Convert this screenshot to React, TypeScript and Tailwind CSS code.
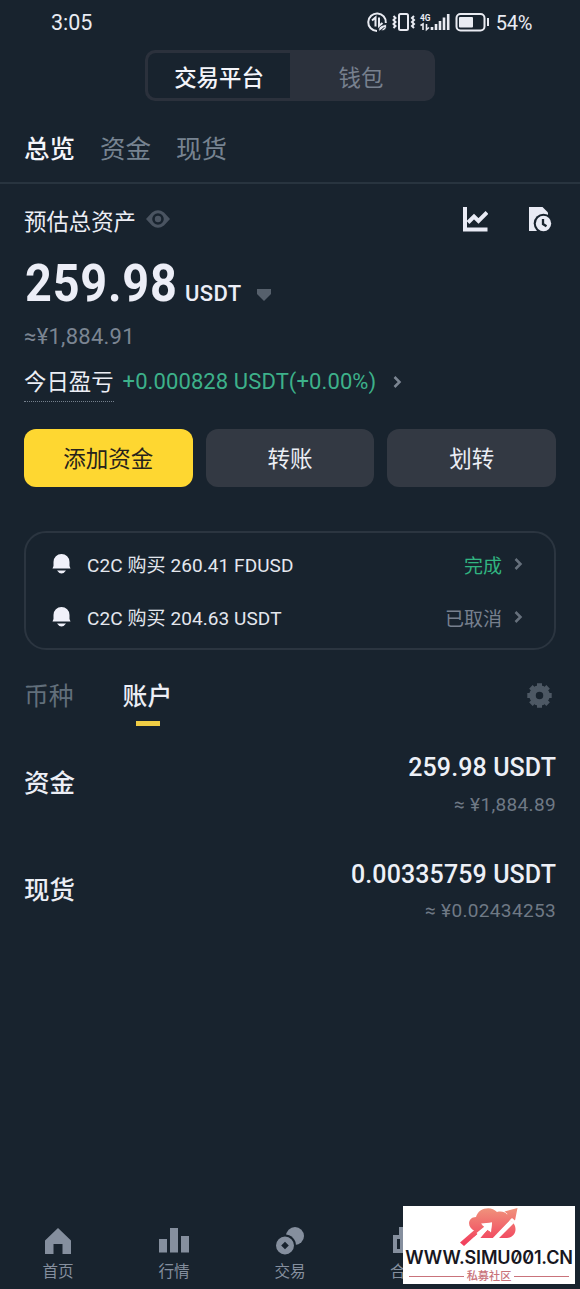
type Notice = { text: string; status: string; done: boolean };
type Account = { name: string; amount: string; fiat: string };

const notices: Notice[] = [
  { text: "C2C 购买 260.41 FDUSD", status: "完成", done: true },
  { text: "C2C 购买 204.63 USDT", status: "已取消", done: false },
];

const accounts: Account[] = [
  { name: "资金", amount: "259.98 USDT", fiat: "¥1,884.89" },
  { name: "现货", amount: "0.00335759 USDT", fiat: "¥0.02434253" },
];

function StatusBar() {
  return (
    <div className="flex h-[45px] items-center justify-between pr-[48px] pl-[51px] text-[#e9ebf2]">
      <span className="text-[21.5px] leading-none">3:05</span>
      <div className="flex items-center">
        <svg
          className="mb-[2px]"
          width="122"
          height="22"
          viewBox="0 0 122 22"
          fill="none"
        >
          {/* data saver */}
          <path
            d="M10 20A8.8 8.8 0 1 1 18.800 12"
            stroke="currentColor"
            strokeWidth="2"
          />
          <path
            d="M5 9.500 8.500 6.500v9M12 6.500v8.500l3.500-3"
            stroke="currentColor"
            strokeWidth="2"
          />
          <path
            d="M12 20c-1-4 2-6 7.500-6.500 .5 4.500-2.500 7-5.500 6l3.500-3.500"
            stroke="#18232e"
            strokeWidth="0.800"
            fill="currentColor"
          />
          {/* vibrate */}
          <rect
            x="32"
            y="3"
            width="9"
            height="16"
            rx="1.500"
            stroke="currentColor"
            strokeWidth="2"
          />
          <path
            d="M26.500 5l2 2-2 2 2 2-2 2 2 2-2 2M47 5l-2 2 2 2-2 2 2 2-2 2 2 2"
            stroke="currentColor"
            strokeWidth="2"
          />
          {/* signal */}
          <text
            x="53"
            y="9.500"
            fill="currentColor"
            fontSize="9.500"
            fontWeight="700"
            textLength="10.500"
            lengthAdjust="spacingAndGlyphs"
          >
            4G
          </text>
          <path
            d="M53.500 14.500l2.500-1.500v6M59.500 13v5.500l2.500-2"
            stroke="currentColor"
            strokeWidth="1.600"
          />
          <path
            d="M65 16v3M69 13v6M73 10v9M77 6.500v12.500M81.200 3v16"
            stroke="currentColor"
            strokeWidth="2.600"
          />
          {/* battery */}
          <rect
            x="89.500"
            y="3"
            width="28"
            height="16.500"
            rx="4"
            stroke="currentColor"
            strokeWidth="2"
          />
          <rect x="92" y="6" width="14" height="10.500" rx="1" fill="currentColor" />
          <path d="M121 7v8" stroke="currentColor" strokeWidth="2" />
        </svg>
        <span className="ml-[7px] text-[20px] leading-none tracking-[-0.300px]">
          54%
        </span>
      </div>
    </div>
  );
}

function Chevron() {
  return (
    <svg width="10" height="14" viewBox="0 0 10 14" fill="none">
      <path d="m1.500 2 5 5-5 5" stroke="currentColor" strokeWidth="2.500" />
    </svg>
  );
}

function Overview() {
  return (
    <section className="px-6">
      <div className="flex h-[73px] items-center">
        <h2 className="pt-[3px] text-[22.4px] leading-none text-[#eceef5]">
          预估总资产
        </h2>
        <svg
          className="mb-[3px] ml-[10px]"
          width="24"
          height="18"
          viewBox="0 0 24 18"
        >
          <path
            fillRule="evenodd"
            fill="#4a5461"
            d="M0 9 6 2.500Q12-2 18 2.500L24 9l-6 6.500q-6 4.500-12 0ZM12 3.200a5.800 5.800 0 1 0 0 11.600 5.800 5.800 0 0 0 0-11.600Z"
          />
          <circle cx="12" cy="9" r="3.200" fill="#4a5461" />
        </svg>
        <div className="mr-1 mb-1 ml-auto flex gap-[41px] text-[#e9ebf5]">
          <svg width="26" height="26" viewBox="0 0 26 26" fill="none">
            <path d="M3 1v22.500h22.500" stroke="currentColor" strokeWidth="4" />
            <path
              d="m6 16.500 6-6 4.500 4.500 8.500-8.500"
              stroke="currentColor"
              strokeWidth="4"
            />
          </svg>
          <svg width="23" height="26" viewBox="0 0 23 26">
            <path d="M0 1h13.500l5.500 5.500V25H0Z" fill="currentColor" />
            <circle cx="14.500" cy="17.500" r="9.800" fill="#18232e" />
            <circle cx="14.500" cy="17.500" r="7.700" fill="currentColor" />
            <path
              d="M14 13v5l3.500 2.200"
              fill="none"
              stroke="#18232e"
              strokeWidth="2.300"
            />
          </svg>
        </div>
      </div>

      <div className="flex h-[55px] items-baseline pl-px text-[#eceef7]">
        <span className="w-[151px] origin-left scale-x-[0.9] text-[52px] leading-[54px] font-bold tracking-[0.900px]">
          259.98
        </span>
        <span className="ml-[9px] text-[22px] leading-none font-medium tracking-[0.400px]">
          USDT
        </span>
        <svg className="ml-[15px]" width="14" height="12" viewBox="0 0 14 12">
          <path d="M0 0h14v5l-7 7-7-7Z" fill="#56606c" />
        </svg>
      </div>
      <p className="mt-[14px] h-[22px] text-[22px] leading-[22px] tracking-[0.250px] text-[#7b8592]">
        ≈¥1,884.91
      </p>

      <div className="mt-[20px] flex h-[34px] items-start leading-[28px]">
        <span className="h-[34px] border-b border-dotted border-[#75808d] text-[22.400px] text-[#eceef5]">
          今日盈亏
        </span>
        <span className="ml-[9px] text-[22px] tracking-[0.100px] text-[#3db18a]">
          +0.000828 USDT(+0.00%)
        </span>
        <span className="mt-[7px] ml-[17px] flex text-[#7b8592]">
          <Chevron />
        </span>
      </div>

      <div className="mt-[27px] grid grid-cols-3 gap-[13px] text-[22.500px] text-[#eceef5]">
        <button className="h-[58px] rounded-xl bg-[#fed731] pt-[3px] text-[#27231c]">
          添加资金
        </button>
        <button className="h-[58px] rounded-xl bg-[#333943] pt-[3px]">
          转账
        </button>
        <button className="h-[58px] rounded-xl bg-[#333943] pt-[3px]">
          划转
        </button>
      </div>
    </section>
  );
}

function Notices() {
  return (
    <section className="mx-6 mt-11 flex h-[119px] flex-col rounded-[22px] border-2 border-[#2b3540] pt-[5px] pr-[30px] pl-[26px]">
      {notices.map((notice) => (
        <div
          key={notice.text}
          className="flex h-[53px] items-center text-[19px] leading-none"
        >
          <svg
            className="mb-[3px]"
            width="19"
            height="21"
            viewBox="0 0 19 21"
            fill="#f0f1fa"
          >
            <path d="M1.500 9a8 8 0 0 1 16 0v4l1 2.500H.5l1-2.500ZM5 17.500h9Q12 20.500 9.500 20.500T5 17.500Z" />
          </svg>
          <span className="ml-4 pt-[2px] tracking-[0.080px] text-[#e4e7ee]">
            {notice.text}
          </span>
          <span
            className={
              notice.done
                ? "ml-auto pt-[3px] text-[#31b581]"
                : "ml-auto pt-[3px] text-[#77808e]"
            }
          >
            {notice.status}
          </span>
          <span className="mb-[2px] ml-[12px] text-[#66707c]">
            <Chevron />
          </span>
        </div>
      ))}
    </section>
  );
}

function Accounts() {
  return (
    <section className="px-6">
      <div className="flex h-[91px] items-center pb-px text-[24.800px] leading-none">
        <span className="pt-1 text-[#626f7b]">币种</span>
        <div className="relative ml-[49px] pt-1 font-medium text-[#eceef5]">
          账户
          <div className="absolute top-[40px] left-[13px] h-[5px] w-6 bg-[#f0cd45]" />
        </div>
        <svg
          className="mr-1 ml-auto"
          width="25"
          height="25"
          viewBox="-12.500 -12.500 25 25"
          fill="#4d5864"
        >
          <circle r="7" fill="none" stroke="#4d5864" strokeWidth="6.500" />
          {[0, 45, 90, 135].map((angle) => (
            <g key={angle} transform={`rotate(${angle})`}>
              <path d="M-2.500-12.200h5V-8h-5ZM-2.500 8h5v4.200h-5Z" />
            </g>
          ))}
        </svg>
      </div>

      {accounts.map((account) => (
        <div
          key={account.name}
          className="flex h-[106.500px] items-start justify-between"
        >
          <span className="mt-[29px] text-[25.500px] leading-[26px] font-medium text-[#eceef5]">
            {account.name}
          </span>
          <div className="flex flex-col items-end">
            <span className="mt-3 text-[25px] leading-[30px] font-medium tracking-[0.100px] text-[#edf0f7]">
              {account.amount}
            </span>
            <span className="mt-[9.500px] text-[19px] leading-[24px] tracking-[0.350px] text-[#6f7985]">
              ≈ {account.fiat}
            </span>
          </div>
        </div>
      ))}
    </section>
  );
}

function BottomNav() {
  return (
    <nav className="mt-auto flex h-[62px] text-[15.600px] leading-[16px] text-[#858f9e]">
      <div className="flex w-[116px] flex-col items-center gap-[9px]">
        <svg width="30" height="28" viewBox="0 0 30 28" fill="currentColor">
          <path d="M15 1 28 13.500V27h-8.500v-10h-9v10H2V13.500Z" />
        </svg>
        <span>首页</span>
      </div>
      <div className="flex w-[116px] flex-col items-center gap-[9px]">
        <svg width="30" height="28" viewBox="0 0 30 28" fill="currentColor">
          <path d="M0 12h8v13.500H0ZM11 1h8v24.500h-8ZM22 9h8v16.500h-8Z" />
        </svg>
        <span>行情</span>
      </div>
      <div className="flex w-[116px] flex-col items-center gap-[9px]">
        <svg width="30" height="28" viewBox="0 0 30 28" fill="currentColor">
          <circle cx="20" cy="9" r="9" />
          <circle cx="10" cy="18.500" r="11" fill="#18232e" />
          <path
            fillRule="evenodd"
            d="M10 9.500a9 9 0 1 0 0 18 9 9 0 0 0 0-18Zm0 5.200 3.800 3.800-3.800 3.800-3.800-3.800Z"
          />
        </svg>
        <span>交易</span>
      </div>
      <div className="flex w-[116px] flex-col gap-[9px] pl-[42px]">
        <svg width="30" height="28" viewBox="0 0 30 28" fill="currentColor">
          <path
            fillRule="evenodd"
            d="M3 8h6V0h5v26H3ZM7 12v10h3V12Z"
          />
        </svg>
        <span>合</span>
      </div>
    </nav>
  );
}

function Watermark() {
  return (
    <div className="absolute top-[1206px] left-[403px] flex h-[78px] w-[172px] flex-col items-center bg-white">
      <svg className="mt-0.5" width="58" height="40" viewBox="0 0 58 40">
        <defs>
          <linearGradient
            id="cloud"
            gradientUnits="userSpaceOnUse"
            x1="0"
            y1="0"
            x2="0"
            y2="38"
          >
            <stop offset="0" stopColor="#f0937c" />
            <stop offset="1" stopColor="#f23a5b" />
          </linearGradient>
        </defs>
        <path
          d="M15 23C6 19 8 9 16 9 18 0 31-3 37 4c8-2 12 3 12 8 9 3 9 17-2 18H14Z"
          fill="url(#cloud)"
        />
        {/* gaps between the arrows */}
        <path
          d="m9 33 16-13.500-3.500-3L32 14.500l-1.500 10-3-3L17 34ZM29 34 50 12l4 3-19 19Z"
          fill="#fff"
        />
        <path
          d="M0 34.500 18.500 18.500l5.500 1.500L4 38ZM22 30 47.500 6 44.500 3.500 57.500 0 55 12.500 52 10 31 30Z"
          fill="url(#cloud)"
        />
        <path d="m21 15.500 11-1-1 10-3-3-8 7-3.500-3.500 8-6.500Z" fill="#fff" />
      </svg>
      <span className="font-['Inter'] text-[18px] leading-[20px] font-semibold tracking-[-0.150px] whitespace-nowrap text-[#171721] [font-feature-settings:'zero']">
        WWW.SIMU001.CN
      </span>
      <div className="mt-[2px] flex w-[160px] items-center gap-[3px] text-[11.200px] leading-[13px] font-medium text-[#c9737b]">
        <div className="h-px grow bg-[#c9737b]" />
        私募社区
        <div className="h-px grow bg-[#c9737b]" />
      </div>
    </div>
  );
}

export default function App() {
  return (
    <main className="relative flex h-[1289px] w-[580px] flex-col overflow-hidden bg-[#18232e] font-['Roboto','Noto_Sans_CJK_SC',sans-serif]">
      <StatusBar />
      <div className="mx-auto mt-[5px] flex h-[51px] w-[290px] rounded-[10px] bg-[#2b313c] p-[3px] text-[22.400px] leading-none">
        <div className="flex w-[142px] items-center justify-center rounded-l-lg bg-[#18232e] pt-[5px] font-medium text-[#f4f5fa]">
          交易平台
        </div>
        <div className="flex flex-1 items-center justify-center pt-[5px] text-[#77808e]">
          钱包
        </div>
      </div>
      <div className="flex h-[83px] items-center gap-[25px] border-b-2 border-[#28343f] px-6 pt-[17px] text-[25.500px] leading-none text-[#778391]">
        <span className="font-medium text-[#f4f5fa]">总览</span>
        <span>资金</span>
        <span>现货</span>
      </div>
      <Overview />
      <Notices />
      <Accounts />
      <BottomNav />
      <Watermark />
    </main>
  );
}
